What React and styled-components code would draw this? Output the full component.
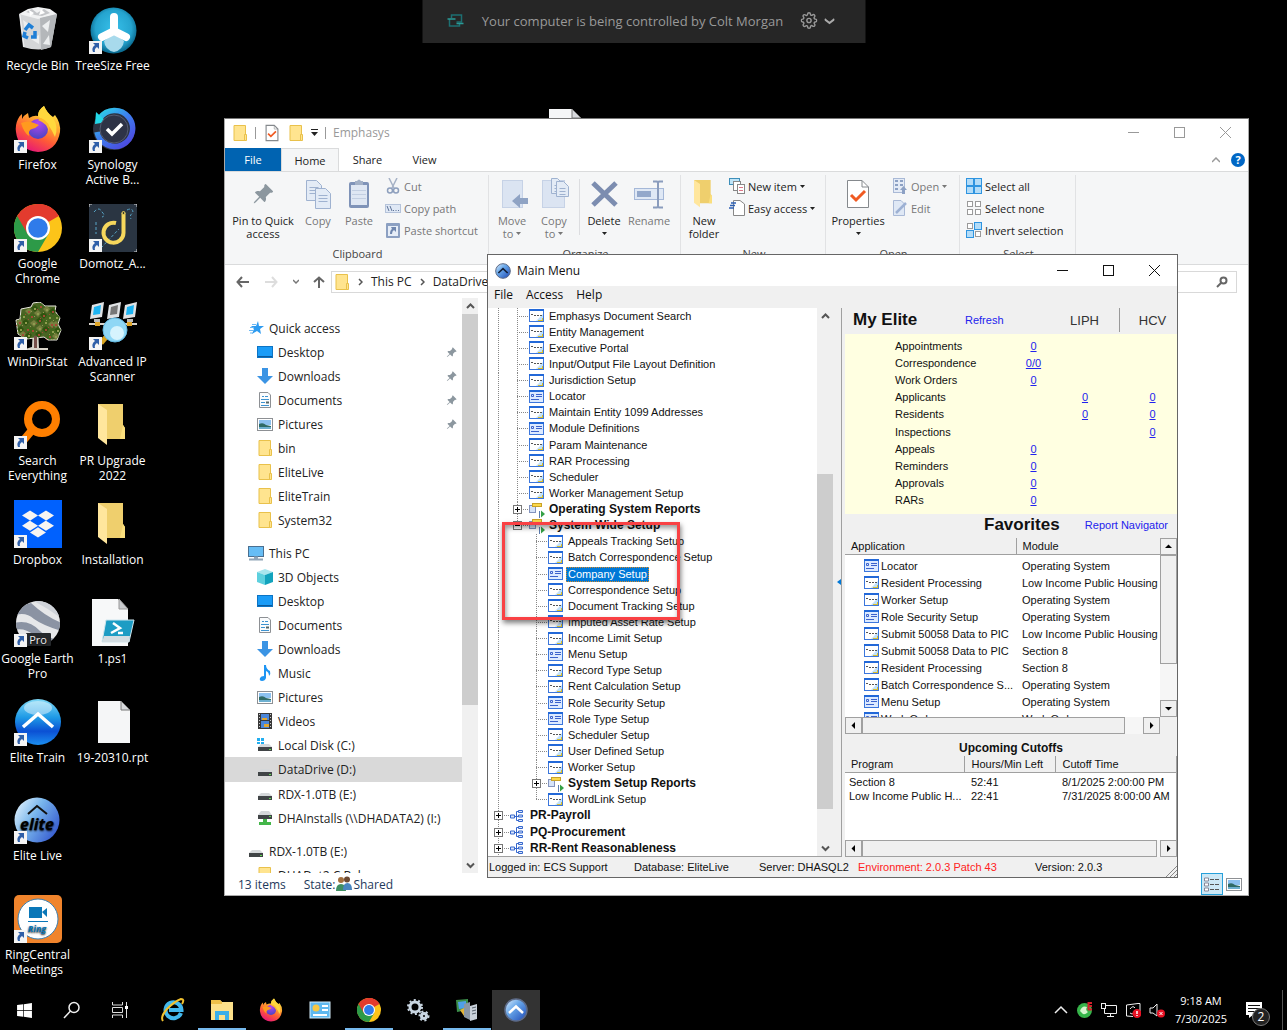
import React from "react";
import styled, { createGlobalStyle, css } from "styled-components";
import { FaDropbox, FaWindows } from "react-icons/fa";
import { BsPinAngleFill } from "react-icons/bs";
import { FiSettings } from "react-icons/fi";

const ui = `"Open Sans", "Noto Sans", sans-serif`;
const classic = `"Liberation Sans", Arial, sans-serif`;

const GlobalStyle = createGlobalStyle`
  *, *::before, *::after {
    box-sizing: border-box;
  }
  body {
    margin: 0;
    background: #000;
    font-family: ${ui};
    font-size: 12px;
    overflow: hidden;
  }
  button, input {
    font: inherit;
    color: inherit;
    border: 0;
    padding: 0;
    background: none;
  }
  h2, h3 {
    margin: 0;
  }
  svg {
    display: block;
    flex: none;
  }
  table {
    border-collapse: collapse;
  }
  th, td {
    padding: 0;
    font-weight: normal;
    text-align: left;
  }
`;

/* ---------- desktop icons ---------- */

const Svg = ({ size = 48, box = 48, children }) => (
  <svg width={size} height={size} viewBox={`0 0 ${box} ${box}`} aria-hidden="true">
    {children}
  </svg>
);

const RecycleBin = () => (
  <Svg>
    <path d="M5 8 L43 8 L37 41 Q26 46 9 41 Z" fill="#d4d6d8" />
    <path d="M5 8 L14 3 L24 1 L36 3 L43 8 L24 13 Z" fill="#f1f2f3" />
    <path d="M26 12 L43 8 L37 41 L27 44 Z" fill="#b4b7ba" />
    <path d="M9 14 l7 5 -5 6z M17 33 l8 -4 0 9z M28 20 l8 -6 -2 12z M29 38 l6 -9 1 10z" fill="#eceeef" />
    <path d="M12 6 l6 -3 5 4 7 -4 6 4 -8 3 -7 -1z" fill="#c3c5c8" />
    <path d="M15 4 l5 3 -4 3z M27 3 l4 4 -6 2z" fill="#fff" />
    <path d="M6 9 L10 41" stroke="#f2f3f4" />
    <g fill="none" stroke="#1f7fd6" strokeWidth="3.500">
      <path d="M11 24 L15 19 L19 22" />
      <path d="M21 25 L21 31 L17 31" />
      <path d="M14 32 L10 30 L11 26" />
    </g>
  </Svg>
);

const TreeSize = () => (
  <Svg>
    <defs>
      <radialGradient id="ts" cx="50%" cy="45%" r="52%">
        <stop offset="0" stopColor="#37c0ea" />
        <stop offset="0.75" stopColor="#25a4cf" />
        <stop offset="1" stopColor="#0d6f95" />
      </radialGradient>
    </defs>
    <circle cx="24.500" cy="24.500" r="23" fill="url(#ts)" />
    <path d="M15 35 L25 27 L35 35 Q34 44 25 46 Q16 44 15 35" fill="#a8daec" />
    <path d="M25 11 V25 L13 31 M25 25 L37 31" stroke="#fff" strokeWidth="8" strokeLinecap="round" strokeLinejoin="round" fill="none" />
  </Svg>
);

const Firefox = ({ size }) => (
  <Svg size={size}>
    <defs>
      <linearGradient id="ff" x1="0.8" y1="0" x2="0.3" y2="1">
        <stop offset="0" stopColor="#fff44f" />
        <stop offset="0.35" stopColor="#ffa930" />
        <stop offset="0.65" stopColor="#ff5b36" />
        <stop offset="1" stopColor="#e5147a" />
      </linearGradient>
      <radialGradient id="ffc" cx="50%" cy="20%" r="80%">
        <stop offset="0" stopColor="#b546f0" />
        <stop offset="1" stopColor="#4b45c2" />
      </radialGradient>
    </defs>
    <path d="M4 14 Q5 11 8 9 L8 14 Q10 10 14 8 L15 13 Q20 10 24 11 Q24 5 30 1 Q33 8 39 12 L41 10 Q47 18 46 27 Q43 46 24 47 Q4 45 2 27 Q1 20 4 14Z" fill="url(#ff)" />
    <path d="M30 1 Q33 8 39 13 Q45 22 41 32 Q36 20 28 14 Q24 12 24 11 Q24 5 30 1" fill="#ffd83d" />
    <circle cx="24" cy="24" r="10" fill="url(#ffc)" />
    <path d="M7 18 Q14 15 20 18 L25 20 Q22 23 18 24 Q14 25 15 31 Q10 28 7 18" fill="#ff9a1f" />
    <path d="M27 13 Q37 17 35 27 Q33 18 24 15Z" fill="#ffb82f" />
  </Svg>
);

const Synology = () => (
  <Svg>
    <defs>
      <linearGradient id="syn" x1="0" y1="0" x2="0.8" y2="1">
        <stop offset="0" stopColor="#2bd9e8" />
        <stop offset="0.5" stopColor="#3d7ff0" />
        <stop offset="1" stopColor="#4c4ade" />
      </linearGradient>
    </defs>
    <circle cx="25" cy="24" r="21" fill="#2b3242" />
    <path d="M11 13 A18 18 0 1 1 8 27" fill="none" stroke="url(#syn)" strokeWidth="5.500" />
    <path d="M7 7 L18 17 L6 19Z" fill="#22d8e8" />
    <circle cx="25" cy="24" r="14" fill="#2e3346" stroke="#545a70" />
    <path d="M18 24 L23 29 L33 19" fill="none" stroke="#fff" strokeWidth="3.500" />
  </Svg>
);

const Chrome = ({ size }) => (
  <Svg size={size}>
    <circle cx="24" cy="24" r="24" fill="#fcc419" />
    <path d="M24 24 L3.200 12 A24 24 0 0 1 44.800 12 Z" fill="#e33b2e" />
    <path d="M24 12 H44.800 A24 24 0 0 0 24 0Z" fill="#e33b2e" />
    <path d="M3.200 12 A24 24 0 0 0 24 48 L34.500 30 L24 24 Z" fill="#2d9a48" />
    <path d="M3.200 12 L13.600 30 L24 24 L24 12Z" fill="#e33b2e" />
    <circle cx="24" cy="24" r="12" fill="#fff" />
    <circle cx="24" cy="24" r="9.800" fill="#2f7bea" />
  </Svg>
);

const Domotz = () => (
  <Svg>
    <rect width="48" height="48" fill="#2a3542" />
    <path d="M0 3 V0 H3 M45 0 H48 V3 M48 45 V48 H45" stroke="#ddd" fill="none" />
    <path d="M5 8 q5 -6 8 0 q4 4 0 5 M38 6 q6 -3 6 3 q-4 2 -2 6 M7 18 V30 M12 44 L30 25" stroke="#58a6c8" strokeDasharray="3 2" fill="none" />
    <path d="M27 19 A10 10 0 1 0 34.500 29 V9" fill="none" stroke="#f6d75c" strokeWidth="4" />
    <circle cx="34.500" cy="9" r="1.500" fill="#3a3a2a" stroke="#f6d75c" />
  </Svg>
);

const leaves = [
  [9, 14], [14, 9], [20, 6], [26, 4], [32, 7], [38, 9], [42, 15], [5, 20], [11, 20], [17, 14], [23, 11],
  [29, 13], [35, 15], [41, 22], [6, 27], [13, 27], [19, 21], [25, 18], [31, 20], [37, 22], [43, 28], [18, 28],
  [25, 26], [31, 27], [38, 29], [8, 32], [14, 33], [35, 34], [41, 34], [24, 32],
];

const WinDirStat = () => (
  <Svg>
    <path d="M19 25 H24 L25 46 H34 V48 H8 L18 45Z" fill="#d8d3c8" />
    <path d="M2 18 L6 17 L7 7 L17 5 L19 1 L26 0 L31 4 L42 4 L41 9 L46 16 L44 22 L47 28 L43 38 L34 38 L30 35 L12 37 L4 32Z" fill="#4a6424" stroke="#e8e6dc" />
    {leaves.map(([x, y], i) => (
      <path
        key={i}
        d={`M${x - 3} ${y} l4 -3 3 3 -3 4z`}
        fill={["#42671c", "#77803f", "#2f540f"][i % 3]}
      />
    ))}
    {leaves.map(([x, y], i) => (
      <path key={i} d={`M${x} ${y}h2v2h-2z M${x - 3} ${y + 3}h1v1h-1z`} fill={i % 2 ? "#a34a35" : "#8f9c50"} />
    ))}
    <path d="M20 34 h3 v12 h-3z" fill="#77504a" />
  </Svg>
);

const IpScanner = () => (
  <Svg>
    <path d="M0 22 H48" stroke="#d8d3cb" strokeWidth="2" />
    {[0, 17, 33].map((x, i) => (
      <g key={x}>
        <path d={`M${x + 3} 3 L${x + 15} 0 L${x + 13} 15 L${x + 1} 17Z`} fill="#e0e2e4" />
        <path d={`M${x + 5} 5 L${x + 12} 3 L${x + 11} 12 L${x + 4} 13Z`} fill={i === 1 ? "#777" : "#1cb3f2"} />
        <path d={`M${x + 5} 17 h6 v3 h-6z`} fill="#bbb" />
      </g>
    ))}
    <path d="M6 20 h5 v4 h-5z M38 20 h5 v4 h-5z" fill="#e0a628" />
    <path d="M12 41 L18 34" stroke="#d8a31e" strokeWidth="5" />
    <circle cx="26" cy="28" r="12" fill="#8fd7f5" stroke="#64b9e2" />
    <circle cx="28" cy="31" r="7" fill="#d6f3fd" />
  </Svg>
);

const Everything = () => (
  <Svg>
    <circle cx="28" cy="18" r="14" fill="none" stroke="#ff7f00" strokeWidth="8" />
    <path d="M19 28 L8 41" stroke="#ff7f00" strokeWidth="8" />
  </Svg>
);

const Dropbox = () => (
  <DropboxTile>
    <FaDropbox />
  </DropboxTile>
);

const BigFolder = ({ size }) => (
  <Svg size={size}>
    <path d="M9 3 H34 V24 L36 27 V38 H17 L9 36Z" fill="#efcf6d" />
    <path d="M9 3 L18 9 V44 L9 37Z" fill="#ffe69d" />
    <path d="M34 24 L36 27 V38 H31Z" fill="#fbdf7d" />
  </Svg>
);

const GoogleEarth = () => (
  <Svg>
    <defs>
      <clipPath id="ge">
        <circle cx="24" cy="24" r="22" />
      </clipPath>
    </defs>
    <g clipPath="url(#ge)">
      <rect width="48" height="48" fill="#e6e7e9" />
      <path d="M2 16 Q6 5 17 4 Q32 18 48 24 V32 Q30 27 20 20 Q12 13 2 16" fill="#8b93a3" />
      <path d="M0 24 Q15 20 26 32 Q36 42 48 40 V48 H36 Q26 40 20 36 Q10 28 0 31" fill="#8b93a3" />
      <path d="M20 2 Q35 10 48 20 V12 L34 0Z" fill="#cfd3d9" />
    </g>
    <rect x="12" y="34" width="25" height="13" rx="1" fill="#25282c" />
    <text x="24" y="45" fill="#eee" fontSize="11" textAnchor="middle" fontFamily="Open Sans">Pro</text>
  </Svg>
);

const Ps1 = () => (
  <Svg>
    <path d="M3 0 H29 L39 10 V47 H3Z" fill="#f7f8f9" />
    <path d="M30 0 V10 H39Z" fill="#c9cbce" stroke="#999" />
    <path d="M17 21 H45 L40 43 H13Z" fill="#1d9cc4" stroke="#cfe6ee" />
    <path d="M15 37 H41 L40 43 H13Z" fill="#d3dde2" />
    <path d="M24 24 L31 29 L22 34 M29 34 H34" fill="none" stroke="#fff" strokeWidth="2.500" />
  </Svg>
);

const PaperFile = () => (
  <Svg>
    <path d="M9 3 H32 L41 12 V45 H9Z" fill="#f5f6f7" />
    <path d="M32 3 V12 H41Z" fill="#d8dadd" stroke="#777" />
  </Svg>
);

const EliteBall = ({ size }) => (
  <Svg size={size}>
    <defs>
      <linearGradient id="eb" x1="0" y1="0" x2="0" y2="1">
        <stop offset="0" stopColor="#7ed8f6" />
        <stop offset="0.4" stopColor="#1e9ae6" />
        <stop offset="0.7" stopColor="#0b50d4" />
        <stop offset="1" stopColor="#1c8ff0" />
      </linearGradient>
    </defs>
    <circle cx="24" cy="24" r="23" fill="url(#eb)" />
    <ellipse cx="24" cy="10" rx="14" ry="7" fill="#fff" opacity="0.45" />
    <path d="M9 29 L24 16 L39 29" fill="none" stroke="#fff" strokeWidth="3.500" />
  </Svg>
);

// the glossy, darker ball used in title bars and on the taskbar
const EliteMini = ({ size }) => (
  <Svg size={size}>
    <defs>
      <linearGradient id="em" x1="0" y1="0" x2="1" y2="1">
        <stop offset="0" stopColor="#e4f1fc" />
        <stop offset="0.4" stopColor="#69a8ea" />
        <stop offset="1" stopColor="#1b46b4" />
      </linearGradient>
    </defs>
    <circle cx="24" cy="24" r="22" fill="url(#em)" stroke="#5d6b88" strokeWidth="3" />
    <path d="M10 30 L24 17 L38 30" fill="none" stroke={size > 20 ? "#fff" : "#152038"} strokeWidth="5" />
  </Svg>
);

const EliteLive = () => (
  <Svg>
    <defs>
      <linearGradient id="el" x1="0" y1="0" x2="1" y2="0.6">
        <stop offset="0" stopColor="#f2fbff" />
        <stop offset="0.5" stopColor="#78b5ec" />
        <stop offset="1" stopColor="#3c63d2" />
      </linearGradient>
    </defs>
    <circle cx="23" cy="24" r="22.500" fill="url(#el)" />
    <path d="M14 18 L23 10 L33 18" fill="none" stroke="#111" strokeWidth="2" />
    <text x="23" y="34" textAnchor="middle" fontSize="16" fontStyle="italic" fontWeight="bold" fontFamily="Open Sans">elite</text>
  </Svg>
);

const RingCentral = () => (
  <Svg>
    <rect width="48" height="48" rx="5" fill="#f0842c" />
    <circle cx="24" cy="24" r="20" fill="#fff" stroke="#3c7fb0" />
    <path d="M15 12 h13 v11 h-13z M28 17 l5 -4 v9z M14 26 h20 v1 h-20z" fill="#0a77b8" />
    <text x="23" y="37" textAnchor="middle" fontSize="9" fontStyle="italic" fontWeight="bold" fill="#0a77b8" fontFamily="Open Sans">Ring</text>
  </Svg>
);

const desktopIcons = [
  { label: "Recycle Bin", icon: <RecycleBin /> },
  { label: "Firefox", icon: <Firefox />, shortcut: true },
  { label: "Google Chrome", icon: <Chrome />, shortcut: true },
  { label: "WinDirStat", icon: <WinDirStat />, shortcut: true },
  { label: "Search Everything", icon: <Everything />, shortcut: true },
  { label: "Dropbox", icon: <Dropbox />, shortcut: true },
  { label: "Google Earth Pro", icon: <GoogleEarth />, shortcut: true },
  { label: "Elite Train", icon: <EliteBall />, shortcut: true },
  { label: "Elite Live", icon: <EliteLive />, shortcut: true },
  { label: "RingCentral Meetings", icon: <RingCentral />, shortcut: true },
  { label: "TreeSize Free", icon: <TreeSize />, shortcut: true },
  { label: "Synology Active B...", icon: <Synology />, shortcut: true },
  { label: "Domotz_A...", icon: <Domotz />, shortcut: true },
  { label: "Advanced IP Scanner", icon: <IpScanner />, shortcut: true },
  { label: "PR Upgrade 2022", icon: <BigFolder /> },
  { label: "Installation", icon: <BigFolder /> },
  { label: "1.ps1", icon: <Ps1 /> },
  { label: "19-20310.rpt", icon: <PaperFile /> },
];

const Shortcut = () => (
  <ShortcutBadge>
    <svg width="13" height="13" viewBox="0 0 13 13">
      <rect width="13" height="13" fill="#f4f4f4" />
      <path d="M4 2 H10 V8 L8 6 Q5 8 6 11 H4 Q2 7 6 4Z" fill="#2f5fa8" />
    </svg>
  </ShortcutBadge>
);

const DesktopIcons = () => (
  <IconGrid>
    {desktopIcons.map((item) => (
      <DesktopItem key={item.label}>
        <IconFrame>
          {item.icon}
          {item.shortcut && <Shortcut />}
        </IconFrame>
        <span>{item.label}</span>
      </DesktopItem>
    ))}
  </IconGrid>
);

const IconGrid = styled.div`
  display: grid;
  grid-auto-flow: column;
  grid-template-rows: repeat(10, 1fr);
  grid-auto-columns: 75px;
  height: 100%;
  padding-bottom: 2px;
  justify-content: start;
`;

const DesktopItem = styled.button`
  display: flex;
  flex-direction: column;
  align-items: center;
  justify-content: flex-start;
  padding-top: 6px;
  gap: 4px;
  color: #fff;
  font-size: 12px;
  line-height: 15px;
  text-align: center;
  text-shadow: 0 1px 2px #000;
`;

const IconFrame = styled.span`
  position: relative;
  width: 48px;
  height: 48px;
`;

const ShortcutBadge = styled.span`
  position: absolute;
  left: 0;
  bottom: 0;
`;

const DropboxTile = styled.span`
  display: flex;
  align-items: center;
  justify-content: center;
  width: 48px;
  height: 48px;
  background: #0061fe;
  color: #f7f5f2;
  font-size: 32px;
`;

/* ---------- small explorer icons ---------- */

const SmallFolder = () => (
  <Svg size={16} box={16}>
    <path d="M2 0.500 H13.500 V15.500 H2Z" fill="#ffe48f" stroke="#e9c14b" />
    <path d="M12.500 9.500 h2 v6 h-2z" fill="#ffe48f" stroke="#e9c14b" />
  </Svg>
);

const StarIcon = () => (
  <Svg size={16} box={16}>
    <path d="M10 1 L11 6 L16 6 L12 9 L13 14 L9 11 L4 14 L6 9 L3 6 L8 6Z" fill="#2d9bf0" />
    <path d="M4 4.500 h4 M2 7.500 h4 M1 10.500 h5 M2 13 h3" stroke="#6cb8f3" />
  </Svg>
);

const DesktopMini = () => (
  <Svg size={16} box={16}>
    <rect x="0.500" y="2.500" width="15" height="11" fill="#1a9cf7" stroke="#0c74c4" />
    <path d="M1 12.500 h14" stroke="#0b5a9c" />
  </Svg>
);

const DownloadMini = () => (
  <Svg size={16} box={16}>
    <path d="M5 0 H11 V8 H16 L8 16 L0 8 H5Z" fill="#3b94e4" />
  </Svg>
);

const DocumentMini = () => (
  <Svg size={16} box={16}>
    <path d="M2.500 0.500 H11 L13.500 3 V15.500 H2.500Z" fill="#fbfcfd" stroke="#8d9094" />
    <path d="M5 4.500 h2 M8 4.500 h3 M4 7.500 h8 M4 10.500 h4 M4 13.500 h8" stroke="#3e93d0" />
    <path d="M9 9.500 h3 v2 h-3z" fill="#566" />
  </Svg>
);

const PictureMini = () => (
  <Svg size={16} box={16}>
    <rect x="0.500" y="2.500" width="15" height="12" fill="#fff" stroke="#8d9094" />
    <rect x="2" y="4" width="12" height="5" fill="#8cc1f0" />
    <path d="M2 8 Q6 6 9 9 L14 10 V13 H2Z" fill="#2f6b66" />
    <path d="M2 11 h12 v2 h-12z" fill="#6db0d0" />
  </Svg>
);

const MusicMini = () => (
  <Svg size={16} box={16}>
    <path d="M7 0 H9 Q9 4 13 6 Q14 9 12 11 Q12 7 9 6 V13 Q8 16 5 16 Q2 16 3 13 Q4 11 7 11Z" fill="#1e95f3" />
  </Svg>
);

const VideoMini = () => (
  <Svg size={16} box={16}>
    <rect x="1" y="0" width="14" height="16" fill="#383838" />
    <rect x="4" y="1" width="8" height="6" fill="#4b86d8" />
    <rect x="4" y="8" width="8" height="7" fill="#4b86d8" />
    <path d="M5 5 h5 v2 h-5z M7 11 h5 v3 h-5z" fill="#e0a530" />
    <path d="M2.500 1 V16 M13.500 1 V16" stroke="#ccc" strokeDasharray="1 2" />
  </Svg>
);

const PcMini = () => (
  <Svg size={16} box={16}>
    <rect x="0.500" y="1.500" width="15" height="10" fill="#66bdf5" stroke="#4a6f90" />
    <path d="M1 14.500 h14 M6 12.500 h4" stroke="#90a5b8" strokeWidth="2" />
  </Svg>
);

const CubeMini = () => (
  <Svg size={16} box={16}>
    <path d="M0 3 L8 0 L16 3 L8 6Z" fill="#a8e6ee" />
    <path d="M0 3 L8 6 V16 L0 13Z" fill="#5dd0de" />
    <path d="M16 3 L8 6 V16 L16 13Z" fill="#12a3bd" />
  </Svg>
);

const DriveMini = ({ os, net }) => (
  <Svg size={16} box={16}>
    {os && <path d="M0 1 h3 v3 h-3z M4 1 h3 v3 h-3z M0 5 h3 v2 h-3z M4 5 h3 v2 h-3z" fill="#22aef0" />}
    <path d={net ? "M4 1 H12 L15 5 H1Z" : "M4 7 H12 L15 10 H1Z"} fill="#d5d8da" />
    <rect x="1" y={net ? 5 : 10} width="14" height="4" fill="#404446" />
    <rect x="12" y={net ? 6 : 12} width="2" height="1" fill="#5fdc50" />
    {net && <path d="M6 9 h4 v3 h4 v3 h-12 v-3 h4z" fill="#43b649" />}
  </Svg>
);

const MinGlyph = () => <path d="M0 5.500 h11" stroke="currentColor" />;
const MaxGlyph = () => <rect x="0.500" y="0.500" width="10" height="10" fill="none" stroke="currentColor" />;
const CloseGlyph = () => <path d="M0 0 L11 11 M11 0 L0 11" stroke="currentColor" />;

const WindowButtons = () => (
  <Controls>
    {[["Minimize", MinGlyph], ["Maximize", MaxGlyph], ["Close", CloseGlyph]].map(([name, Glyph]) => (
      <button key={name} aria-label={name}>
        <Svg size={11} box={11}>
          <Glyph />
        </Svg>
      </button>
    ))}
  </Controls>
);

const Controls = styled.div`
  display: flex;
  margin-left: auto;
  button {
    width: 46px;
    height: 30px;
    display: flex;
    align-items: center;
    justify-content: center;
  }
`;

/* ---------- ribbon ---------- */

const tint = { fill: "#dbe4f2", stroke: "#c6d2e6" };

const Sheet = ({ x, y, w = 14, h = 19, fill = "#e3ebf6", stroke = "#9fb2d0" }) => (
  <g>
    <path d={`M${x} ${y} h${w - 5} l5 5 v${h - 5} h-${w}z`} fill={fill} stroke={stroke} />
    <path d={`M${x + 3} ${y + 7} h${w - 6} M${x + 3} ${y + 10} h${w - 6} M${x + 3} ${y + 13} h${w - 6}`} stroke={stroke} />
  </g>
);

const CopyBig = () => (
  <Svg size={32} box={32}>
    <Sheet x={4.5} y={2.5} w={15} h={20} />
    <Sheet x={13.5} y={10.5} w={15} h={20} />
  </Svg>
);

const PasteBig = () => (
  <Svg size={32} box={32}>
    <rect x="6" y="4" width="20" height="26" rx="2" fill="#7f93b8" />
    <rect x="8" y="7" width="16" height="20" fill="#dfe7f3" />
    <path d="M12 3 h2 q2 -3 4 0 h2 v4 h-8z" fill="#a2b0c6" />
    <path d="M9 12.500 h14 M9 16.500 h14 M9 20.500 h14" stroke="#c3cfe2" />
  </Svg>
);

const MoveBig = () => (
  <Svg size={32} box={32}>
    <rect x="6.500" y="2.500" width="20" height="27" {...tint} />
    <path d="M16 23 L24 16 V20 H32 V26 H24 V30Z" fill="#8fa3c4" />
  </Svg>
);

const CopyToBig = () => (
  <Svg size={32} box={32}>
    <rect x="4.500" y="2.500" width="22" height="27" {...tint} />
    <Sheet x={13.5} y={0.5} w={11} h={15} />
    <Sheet x={18.5} y={3.5} w={12} h={15} />
  </Svg>
);

const DeleteBig = () => (
  <Svg size={32} box={32}>
    <path d="M5 5 L28 27 M28 5 L5 27" stroke="#7c8db0" strokeWidth="5" />
  </Svg>
);

const RenameBig = () => (
  <Svg size={32} box={32}>
    <rect x="1.500" y="10.500" width="29" height="11" fill="#dfe8f5" stroke="#a5b8d8" />
    <rect x="4" y="13" width="14" height="6" fill="#93a8cb" />
    <path d="M20 3.500 h4 l1 1 l1 -1 h4 M20 29.500 h4 l1 -1 l1 1 h4 M25 4 V29" stroke="#8a9cbd" strokeWidth="2" fill="none" />
  </Svg>
);

const PropertiesIcon = ({ size = 32 }) => (
  <Svg size={size} box={32}>
    <path d="M5.500 2.500 H20 L26.500 9 V29.500 H5.500Z" fill="#fff" stroke="#85898d" strokeWidth={size < 32 ? 2 : 1} />
    <path d="M20 2.500 V9 H26.500" fill="none" stroke="#85898d" />
    <path d="M9 17 L14 22 L23 13" fill="none" stroke="#f05a22" strokeWidth="3" />
  </Svg>
);

const CutIcon = () => (
  <Svg size={16} box={16}>
    <path d="M4 0 L9 10 M12 0 L7 10" stroke="#a6b2c6" strokeWidth="1.500" />
    <circle cx="5" cy="12.500" r="2.500" fill="none" stroke="#8d9fbd" strokeWidth="1.500" />
    <circle cx="11" cy="12.500" r="2.500" fill="none" stroke="#8d9fbd" strokeWidth="1.500" />
  </Svg>
);

const PathIcon = () => (
  <Svg size={16} box={16}>
    <rect x="0.500" y="4.500" width="15" height="8" fill="#dfe8f5" stroke="#b5c3da" />
    <path d="M2 6 l2 5 M5 6 l2 5 M8 10.500 h1 M10.500 10.500 h1 M13 10.500 h1" stroke="#5f7499" />
  </Svg>
);

const ShortcutIcon = () => (
  <Svg size={16} box={16}>
    <rect x="1" y="1" width="14" height="15" rx="1" fill="#8ca0c2" />
    <rect x="3" y="4" width="10" height="10" fill="#e6edf7" />
    <path d="M6 5 H11 V10 L9 8 Q7 9 7 12 H5 Q5 8 7 7Z" fill="#6f86ae" />
  </Svg>
);

const NewItemIcon = () => (
  <Svg size={16} box={16}>
    <rect x="0.500" y="0.500" width="10" height="6" fill="#bfe4f7" stroke="#3d8eb9" />
    <rect x="4.500" y="3.500" width="7" height="9" fill="#fff" stroke="#888" />
    <rect x="8.500" y="6.500" width="7" height="9" fill="#fff" stroke="#888" />
    <path d="M10 9.500 h4 M10 12.500 h4" stroke="#d78" />
  </Svg>
);

const EasyIcon = () => (
  <Svg size={16} box={16}>
    <path d="M4.500 0.500 H11 L15.500 4 V15.500 H4.500Z" fill="#fff" stroke="#888" />
    <path d="M2 3 h5 M1 5.500 h5 M0 8 h5" stroke="#2f62b5" strokeWidth="1.500" />
  </Svg>
);

const OpenIcon = () => (
  <Svg size={16} box={16}>
    <rect x="1.500" y="0.500" width="11" height="14" fill="#e4ebf6" stroke="#a9b9d6" />
    <path d="M3 3 h3 M3 7 h3 M3 11 h3 M8 3 h3 M8 7 h3" stroke="#8da1c4" strokeWidth="2" />
    <path d="M8 12 L11.500 8 L15 12 H13 V16 H10 V12Z" fill="#8da1c4" />
  </Svg>
);

const EditIcon = () => (
  <Svg size={16} box={16}>
    <path d="M1.500 0.500 H9 L12.500 4 V15.500 H1.500Z" fill="#dfe8f5" stroke="#a9b9d6" />
    <path d="M4 13 L14 3" stroke="#9db1d3" strokeWidth="2.500" />
  </Svg>
);

const Cells = ({ on }) => (
  <Svg size={16} box={16}>
    {[[0.5, 0.5], [8.5, 0.5], [0.5, 8.5], [8.5, 8.5]].map(([x, y], i) => {
      const lit = on.includes(i);
      return lit ? (
        <rect key={i} x={x} y={y} width="7" height="7" fill="#b3dcf8" stroke="#2e94e0" />
      ) : (
        <rect key={i} x={x + 1} y={y + 1} width="5" height="5" fill="#fff" stroke="#9a9a9a" />
      );
    })}
  </Svg>
);

const Caret = () => (
  <svg width="5" height="3" viewBox="0 0 5 3" aria-hidden="true">
    <path d="M0 0 H5 L2.500 3Z" fill="currentColor" />
  </svg>
);

const Pin = ({ big }) => <PinGlyph as={BsPinAngleFill} $big={big} />;

const PinGlyph = styled.svg`
  width: ${(p) => (p.$big ? 22 : 11)}px;
  height: ${(p) => (p.$big ? 32 : 11)}px;
  color: #8c979f;
`;

const Ribbon = () => (
  <RibbonBar>
    <Group>
      <Tools>
        <BigTool $w={72}><Pin big />Pin to Quick access</BigTool>
        <BigTool $w={38} $off><CopyBig />Copy</BigTool>
        <BigTool $w={44} $off><PasteBig />Paste</BigTool>
        <ToolStack>
          <SmallTool $off><CutIcon />Cut</SmallTool>
          <SmallTool $off><PathIcon />Copy path</SmallTool>
          <SmallTool $off><ShortcutIcon />Paste shortcut</SmallTool>
        </ToolStack>
      </Tools>
      <GroupName>Clipboard</GroupName>
    </Group>
    <Group>
      <Tools>
        <BigTool $w={42} $off><MoveBig />Move<span>to <Caret /></span></BigTool>
        <BigTool $w={42} $off><CopyToBig />Copy<span>to <Caret /></span></BigTool>
        <Divider />
        <BigTool $w={40}><DeleteBig />Delete<span><Caret /></span></BigTool>
        <BigTool $w={50} $off><RenameBig />Rename</BigTool>
      </Tools>
      <GroupName>Organize</GroupName>
    </Group>
    <Group>
      <Tools>
        <BigTool $w={42}><BigFolder size={32} />New folder</BigTool>
        <ToolStack>
          <SmallTool><NewItemIcon />New item <Caret /></SmallTool>
          <SmallTool><EasyIcon />Easy access <Caret /></SmallTool>
        </ToolStack>
      </Tools>
      <GroupName>New</GroupName>
    </Group>
    <Group>
      <Tools>
        <BigTool $w={60}><PropertiesIcon />Properties<span><Caret /></span></BigTool>
        <ToolStack>
          <SmallTool $off><OpenIcon />Open <Caret /></SmallTool>
          <SmallTool $off><EditIcon />Edit</SmallTool>
        </ToolStack>
      </Tools>
      <GroupName>Open</GroupName>
    </Group>
    <Group>
      <Tools>
        <ToolStack>
          <SmallTool><Cells on={[0, 1, 2, 3]} />Select all</SmallTool>
          <SmallTool><Cells on={[]} />Select none</SmallTool>
          <SmallTool><Cells on={[1, 2]} />Invert selection</SmallTool>
        </ToolStack>
      </Tools>
      <GroupName>Select</GroupName>
    </Group>
  </RibbonBar>
);

const RibbonBar = styled.div`
  display: flex;
  flex: none;
  height: 94px;
  background: #f5f6f7;
  border-top: 1px solid #dadbdc;
  border-bottom: 1px solid #dadbdc;
  font-size: 11px;
  color: #222;
`;

const Group = styled.section`
  display: flex;
  flex-direction: column;
  margin-top: 3px;
  padding-left: 2px;
  border-right: 1px solid #e1e2e4;
  &:nth-of-type(1) { width: 264px; }
  &:nth-of-type(2) { width: 192px; }
  &:nth-of-type(3) { width: 145px; }
  &:nth-of-type(4) { width: 134px; }
  &:nth-of-type(5) { width: 116px; }
`;

const Tools = styled.div`
  display: flex;
  flex: 1;
`;

const BigTool = styled.button`
  display: flex;
  flex-direction: column;
  align-items: center;
  width: ${(p) => p.$w}px;
  padding-top: 3px;
  line-height: 13px;
  color: ${(p) => (p.$off ? "#777" : "#222")};
  svg:first-child {
    margin-bottom: 4px;
  }
  span {
    display: flex;
    align-items: center;
    gap: 3px;
    min-height: 13px;
  }
  span svg:first-child {
    margin: 0;
  }
`;

const ToolStack = styled.div`
  display: flex;
  flex-direction: column;
  padding-left: 4px;
`;

const SmallTool = styled.button`
  display: flex;
  align-items: center;
  gap: 3px;
  height: 22px;
  white-space: nowrap;
  color: ${(p) => (p.$off ? "#777" : "#222")};
`;

const Divider = styled.span`
  width: 1px;
  height: 56px;
  margin: 4px 4px 0;
  background: #dcdde0;
`;

const GroupName = styled.div`
  text-align: center;
  height: 19px;
  line-height: 17px;
  color: #444;
`;

/* ---------- explorer ---------- */

const navGroups = [
  {
    name: "Quick access",
    icon: <StarIcon />,
    items: [
      { name: "Desktop", icon: <DesktopMini />, pinned: true },
      { name: "Downloads", icon: <DownloadMini />, pinned: true },
      { name: "Documents", icon: <DocumentMini />, pinned: true },
      { name: "Pictures", icon: <PictureMini />, pinned: true },
      { name: "bin", icon: <SmallFolder /> },
      { name: "EliteLive", icon: <SmallFolder /> },
      { name: "EliteTrain", icon: <SmallFolder /> },
      { name: "System32", icon: <SmallFolder /> },
    ],
  },
  {
    name: "This PC",
    icon: <PcMini />,
    items: [
      { name: "3D Objects", icon: <CubeMini /> },
      { name: "Desktop", icon: <DesktopMini /> },
      { name: "Documents", icon: <DocumentMini /> },
      { name: "Downloads", icon: <DownloadMini /> },
      { name: "Music", icon: <MusicMini /> },
      { name: "Pictures", icon: <PictureMini /> },
      { name: "Videos", icon: <VideoMini /> },
      { name: "Local Disk (C:)", icon: <DriveMini os /> },
      { name: "DataDrive (D:)", icon: <DriveMini />, selected: true },
      { name: "RDX-1.0TB (E:)", icon: <DriveMini /> },
      { name: "DHAInstalls (\\\\DHADATA2) (I:)", icon: <DriveMini net /> },
    ],
  },
  {
    name: "RDX-1.0TB (E:)",
    icon: <DriveMini />,
    items: [{ name: "DHADat2 C Bak", icon: <SmallFolder /> }],
  },
];

const NavPane = () => (
  <NavWrap>
    <NavList>
      {navGroups.map((group) => (
        <NavGroup key={group.name}>
          <NavRow href="#">{group.icon}{group.name}</NavRow>
          {group.items.map((item) => (
            <NavRow href="#" key={item.name} $child $selected={item.selected}>
              {item.icon}
              <span>{item.name}</span>
              {item.pinned && <Pin />}
            </NavRow>
          ))}
        </NavGroup>
      ))}
    </NavList>
    <ScrollBar>
      <Chevron up />
      <Thumb $grow={389} />
      <Space $grow={151} />
      <Chevron />
    </ScrollBar>
  </NavWrap>
);

const Chevron = ({ up }) => (
  <Svg size={16} box={16}>
    <path d={up ? "M5 10 L8.500 6.500 L12 10" : "M5 6.500 L8.500 10 L12 6.500"} fill="none" stroke="#555" strokeWidth="2" />
  </Svg>
);

const Explorer = () => (
  <ExplorerWindow>
    <TitleBar>
      <SmallFolder />
      <Bar />
      <PropertiesIcon size={18} />
      <SmallFolder />
      <svg width="7" height="7" viewBox="0 0 7 7"><path d="M0 0 h7 v1 h-7z M0 3 h7 l-3.500 4z" fill="#222" /></svg>
      <Bar />
      <span>Emphasys</span>
      <WindowButtons />
    </TitleBar>
    <Tabs>
      <Tab $kind="file">File</Tab>
      <Tab $kind="on">Home</Tab>
      <Tab>Share</Tab>
      <Tab>View</Tab>
      <TabEnd>
        <svg width="8" height="6" viewBox="0 0 8 6"><path d="M0 5 L4 1 L8 5" fill="none" stroke="#999" strokeWidth="1.500" /></svg>
        <HelpButton aria-label="Help">?</HelpButton>
      </TabEnd>
    </Tabs>
    <Ribbon />
    <AddressRow>
      <NavArrows>
        <Svg size={14} box={14}><path d="M13 7 H2 M6 2 L1.500 7 L6 12" stroke="#666" strokeWidth="2" fill="none" /></Svg>
        <Svg size={14} box={14}><path d="M1 7 H12 M8 2 L12.500 7 L8 12" stroke="#ddd" strokeWidth="2" fill="none" /></Svg>
        <Svg size={6} box={6}><path d="M0 1 L3 4 L6 1" stroke="#777" strokeWidth="1.500" fill="none" /></Svg>
        <Svg size={12} box={12}><path d="M6 12 V2 M1 6 L6 1.500 L11 6" stroke="#666" strokeWidth="2" fill="none" /></Svg>
      </NavArrows>
      <AddressBox>
        <SmallFolder />
        <Crumb />
        <a href="#">This PC</a>
        <Crumb />
        <a href="#">DataDrive (D:)</a>
      </AddressBox>
      <SearchBox>
        <input aria-label="Search Emphasys" />
        <Svg size={12} box={12}>
          <circle cx="7.500" cy="4.500" r="3" fill="none" stroke="#666" strokeWidth="2" />
          <path d="M5 7 L1 11" stroke="#666" strokeWidth="2" />
        </Svg>
      </SearchBox>
    </AddressRow>
    <NavPane />
    <ExplorerStatus>
      <span>13 items</span>
      <span>
        State:
        <Svg size={16} box={16}>
          <circle cx="5" cy="4" r="3" fill="#a4703f" />
          <path d="M0 15 Q0 8 5 8 Q10 8 10 15Z" fill="#3f8f62" />
          <circle cx="11" cy="3.500" r="3" fill="#6d4a33" />
          <path d="M7 14 Q7 7 11.500 7 Q16 7 16 14Z" fill="#4a86c0" />
        </Svg>
        Shared
      </span>
      <ViewSwitch>
        <ViewButton $on aria-label="Details view">
          <Svg size={16} box={16}>
            <path d="M0.500 2 h4 v3 h-4z M0.500 7 h4 v3 h-4z M0.500 12 h4 v3 h-4z" fill="#fff" stroke="#889" />
            <path d="M6 3.500 h4 M11 3.500 h4 M6 8.500 h4 M11 8.500 h4 M6 13.500 h4 M11 13.500 h4" stroke="#555" />
          </Svg>
        </ViewButton>
        <ViewButton aria-label="Thumbnails view"><PictureMini /></ViewButton>
      </ViewSwitch>
    </ExplorerStatus>
  </ExplorerWindow>
);

const Crumb = () => (
  <svg width="5" height="8" viewBox="0 0 5 8"><path d="M1 1 L4 4 L1 7" stroke="#555" strokeWidth="1.500" fill="none" /></svg>
);

const ExplorerWindow = styled.section`
  position: absolute;
  left: 224px;
  right: 38px;
  top: 118px;
  bottom: 94px;
  display: flex;
  flex-direction: column;
  background: #fff;
  border: 1px solid #aaa;
  border-top-color: #777;
  overflow: hidden;
`;

const TitleBar = styled.header`
  display: flex;
  align-items: center;
  flex: none;
  height: 29px;
  padding: 0 0 2px 7px;
  gap: 7px;
  color: #999;
`;

const Bar = styled.span`
  width: 1px;
  height: 12px;
  background: #999;
`;

const Tabs = styled.nav`
  display: flex;
  flex: none;
  height: 23px;
  font-size: 11px;
`;

const Tab = styled.button`
  width: 57px;
  color: #222;
  ${(p) => p.$kind === "file" && css`
    width: 56px;
    background: #0063b1;
    color: #fff;
  `}
  ${(p) => p.$kind === "on" && css`
    width: 58px;
    background: #f5f6f7;
    border: 1px solid #dadbdc;
    border-bottom: 0;
  `}
`;

const TabEnd = styled.div`
  display: flex;
  align-items: center;
  gap: 11px;
  margin-left: auto;
  margin-right: 3px;
`;

const HelpButton = styled.button`
  width: 14px;
  height: 14px;
  border-radius: 50%;
  background: #0067c5;
  color: #fff;
  font-weight: bold;
  line-height: 14px;
`;

const AddressRow = styled.div`
  display: flex;
  align-items: center;
  flex: none;
  height: 33px;
  padding: 0 11px;
  gap: 6px;
`;

const NavArrows = styled.div`
  display: flex;
  align-items: center;
  justify-content: space-between;
  width: 89px;
`;

const AddressBox = styled.div`
  display: flex;
  align-items: center;
  flex: 1;
  height: 22px;
  border: 1px solid #d9d9d9;
  padding-left: 2px;
  gap: 8px;
  a {
    color: #222;
    text-decoration: none;
  }
`;

const SearchBox = styled.label`
  display: flex;
  align-items: center;
  width: 200px;
  height: 22px;
  border: 1px solid #d9d9d9;
  padding: 0 8px;
  input {
    flex: 1;
    min-width: 0;
  }
`;

const NavWrap = styled.div`
  display: flex;
  flex: 1;
  width: 253px;
  min-height: 0;
`;

const NavList = styled.nav`
  flex: 1;
  padding-top: 18px;
  overflow: hidden;
`;

const NavGroup = styled.div`
  margin-bottom: 9px;
`;

const NavRow = styled.a`
  display: flex;
  align-items: center;
  height: ${(p) => (p.$selected ? 25 : 24)}px;
  gap: 5px;
  padding: 0 5px 0 ${(p) => (p.$child ? 32 : 23)}px;
  background: ${(p) => (p.$selected ? "#d9d9d9" : "transparent")};
  color: #222;
  text-decoration: none;
  white-space: nowrap;
  span + svg {
    margin-left: auto;
  }
`;

const ScrollBar = styled.div`
  display: flex;
  flex-direction: column;
  width: 16px;
  background: #f0f0f0;
`;

const Thumb = styled.span`
  flex: ${(p) => p.$grow} 0 0;
  background: #cdcdcd;
`;

const Space = styled.span`
  flex: ${(p) => p.$grow} 0 0;
`;

const ExplorerStatus = styled.footer`
  display: flex;
  align-items: center;
  flex: none;
  height: 22px;
  padding-left: 13px;
  gap: 18px;
  color: #1e395b;
  span {
    display: flex;
    align-items: center;
    gap: 1px;
  }
`;

const ViewSwitch = styled.div`
  display: flex;
  margin-left: auto;
  margin-right: 3px;
`;

const ViewButton = styled.button`
  display: flex;
  align-items: center;
  justify-content: center;
  width: 22px;
  height: 22px;
  ${(p) => p.$on && css`
    background: #cce8f6;
    border: 1px solid #26a0da;
  `}
`;

/* ---------- main menu window ---------- */

const ScreenIcon = ({ form }) => (
  <svg width="15" height="14" viewBox="0 0 15 14" aria-hidden="true">
    <rect x="0.500" y="0.500" width="14" height="12" fill={form ? "#dceaff" : "#fff"} stroke="#3b76dc" />
    <path d="M0 0 h15 v2 h-15z" fill="#2268d8" />
    {form ? (
      <>
        <path d="M2.500 4.500 h2 v2 h-2z" fill="none" stroke="#3b62cc" />
        <path d="M7 4 h6 v1 h-6z M7 6 h6 v1 h-6z M2 9 h8 v1 h-8z" fill="#3b62cc" />
      </>
    ) : (
      <>
        <path d="M7 12 L14 5 V12Z" fill="#bfe0fb" />
        <path d="M2 5 h2 v1 h-2z M5 6 h2 v1 h-2z M8 6 h2 v1 h-2z M11 6 h2 v1 h-2z" fill="#555" />
        <path d="M9 11 h4 v-2 h1 v3 h-5z" fill="#dcbf2c" />
      </>
    )}
  </svg>
);

const ReportsIcon = () => (
  <svg width="16" height="16" viewBox="0 0 16 16" aria-hidden="true">
    <rect x="0.500" y="3.500" width="6" height="7" fill="#d6e3f8" stroke="#8393bd" />
    <rect x="3.500" y="1.500" width="9" height="3" fill="#fbd84a" stroke="#c9a227" />
    <path d="M10.500 9 V16" stroke="#5b7bb0" />
    <path d="M12 8.500 L16 12 L12 15.500Z" fill="#35a045" />
  </svg>
);

const ModuleIcon = () => (
  <svg width="15" height="14" viewBox="0 0 15 14" aria-hidden="true">
    <path d="M0.500 6 h4 v3 h-4z M8.500 1.500 h4 v2 h-4z M8.500 6 h4 v2 h-4z M8.500 10.500 h4 v2 h-4z" fill="#dbe6fb" stroke="#3567cd" />
    <path d="M5 7.500 h3 M6.500 2.500 V11.500 M6.500 2.500 h2 M6.500 11.500 h2" stroke="#3567cd" fill="none" />
  </svg>
);

// a leading * marks a form screen, which has its own icon
const leaf = (depth) => (text) => {
  const form = text.startsWith("*");
  return { depth, text: form ? text.slice(1) : text, icon: <ScreenIcon form={form} /> };
};

const tree = [
  ...[
    "Emphasys Document Search", "Entity Management", "Executive Portal", "Input/Output File Layout Definition",
    "Jurisdiction Setup", "*Locator", "Maintain Entity 1099 Addresses", "*Module Definitions", "Param Maintenance",
    "RAR Processing", "Scheduler", "Worker Management Setup",
  ].map(leaf(1)),
  { depth: 1, text: "Operating System Reports", icon: <ReportsIcon />, toggle: "+" },
  { depth: 1, text: "System Wide Setup", icon: <ReportsIcon />, toggle: "-", last: true },
  ...[
    "Appeals Tracking Setup", "Batch Correspondence Setup", "*Company Setup", "Correspondence Setup",
    "Document Tracking Setup", "Imputed Asset Rate Setup", "Income Limit Setup", "*Menu Setup", "Record Type Setup",
    "Rent Calculation Setup", "*Role Security Setup", "*Role Type Setup", "Scheduler Setup", "User Defined Setup",
    "Worker Setup",
  ].map(leaf(2)),
  { depth: 2, text: "System Setup Reports", icon: <ReportsIcon />, toggle: "+" },
  { ...leaf(2)("WordLink Setup"), last: true },
  { depth: 0, text: "PR-Payroll", icon: <ModuleIcon />, toggle: "+" },
  { depth: 0, text: "PQ-Procurement", icon: <ModuleIcon />, toggle: "+" },
  { depth: 0, text: "RR-Rent Reasonableness", icon: <ModuleIcon />, toggle: "+" },
];

const TreeView = () => (
  <Tree>
    {tree.map((node) => (
      <TreeRow key={node.text}>
        {node.depth > 0 && <Guide $line />}
        {node.depth > 1 && <Guide />}
        <Joint $last={node.last}>
          {node.toggle && (
            <Toggle aria-label={(node.toggle === "+" ? "Expand " : "Collapse ") + node.text}>
              <svg width="9" height="9" viewBox="0 0 9 9">
                <rect x="0.500" y="0.500" width="8" height="8" fill="#fff" stroke="#777" />
                <path d={node.toggle === "+" ? "M2 4.500 h5 M4.500 2 v5" : "M2 4.500 h5"} stroke="#000" />
              </svg>
            </Toggle>
          )}
        </Joint>
        <NodeIcon>{node.icon}</NodeIcon>
        <NodeLabel $bold={!!node.toggle} $selected={node.text === "Company Setup"}>{node.text}</NodeLabel>
      </TreeRow>
    ))}
  </Tree>
);

const Tree = styled.ul`
  flex: 1;
  display: flex;
  flex-direction: column;
  margin: 0;
  padding: 0 0 0 1px;
  list-style: none;
  background: #fff;
`;

const TreeRow = styled.li`
  display: flex;
  align-items: center;
  flex: 1;
  min-height: 0;
`;

const dotsDown = "repeating-linear-gradient(#888 0 1px, transparent 1px 2px)";
const dotsAcross = "repeating-linear-gradient(90deg, #888 0 1px, transparent 1px 2px)";

const Guide = styled.span`
  align-self: stretch;
  width: 19px;
  background: ${(p) => (p.$line ? `${dotsDown} 9px 0 / 1px 100% no-repeat` : "none")};
`;

const Joint = styled.span`
  align-self: stretch;
  display: flex;
  align-items: center;
  width: 21px;
  padding-left: 5px;
  background:
    ${dotsDown} 9px 0 / 1px ${(p) => (p.$last ? "50%" : "100%")} no-repeat,
    ${dotsAcross} 9px 50% / 12px 1px no-repeat;
`;

const Toggle = styled.button`
  width: 9px;
  height: 9px;
`;

const NodeIcon = styled.span`
  width: 15px;
  svg {
    overflow: visible;
  }
`;

const NodeLabel = styled.span`
  margin-left: 3px;
  padding: 0 2px;
  line-height: 15px;
  white-space: nowrap;
  font-size: ${(p) => (p.$bold ? 12 : 11)}px;
  font-weight: ${(p) => (p.$bold ? "bold" : "normal")};
  ${(p) => p.$selected && css`
    background: #0078d7;
    color: #fff;
    outline: 1px dotted #d98a28;
    outline-offset: -1px;
  `}
`;

const counters = [
  ["Appointments", "0", "", ""],
  ["Correspondence", "0/0", "", ""],
  ["Work Orders", "0", "", ""],
  ["Applicants", "", "0", "0"],
  ["Residents", "", "0", "0"],
  ["Inspections", "", "", "0"],
  ["Appeals", "0", "", ""],
  ["Reminders", "0", "", ""],
  ["Approvals", "0", "", ""],
  ["RARs", "0", "", ""],
];

const favorites = [
  ["*Locator", "Operating System"],
  ["Resident Processing", "Low Income Public Housing"],
  ["Worker Setup", "Operating System"],
  ["*Role Security Setup", "Operating System"],
  ["Submit 50058 Data to PIC", "Low Income Public Housing"],
  ["Submit 50058 Data to PIC", "Section 8"],
  ["Resident Processing", "Section 8"],
  ["Batch Correspondence S...", "Operating System"],
  ["*Menu Setup", "Operating System"],
  ["*Work Orders", "Work Orders"],
];

const Tri = ({ d }) => (
  <svg width="9" height="9" viewBox="0 0 9 9" aria-hidden="true"><path d={d} fill="#000" /></svg>
);
const triUp = "M1 6 L4.500 2.500 L8 6Z";
const triDown = "M1 3 L4.500 6.500 L8 3Z";
const triLeft = "M6 1 L2.500 4.500 L6 8Z";
const triRight = "M3 1 L6.500 4.500 L3 8Z";

const ElitePanel = () => (
  <Panel>
    <EliteHead>
      <BigHeading>My Elite</BigHeading>
      <a href="#">Refresh</a>
      <ColumnName $line>LIPH</ColumnName>
      <ColumnName>HCV</ColumnName>
    </EliteHead>
    <CounterBox>
      <CounterTable>
        <tbody>
          {counters.map(([name, ...values]) => (
            <tr key={name}>
              <th scope="row">{name}</th>
              {values.map((v, i) => (
                <td key={i}>{v && <a href="#">{v}</a>}</td>
              ))}
            </tr>
          ))}
        </tbody>
      </CounterTable>
    </CounterBox>
    <FavHead>
      <BigHeading>Favorites</BigHeading>
      <a href="#">Report Navigator</a>
    </FavHead>
    <FavBody>
      <FavList>
        <FavTable>
          <thead>
            <tr>
              <th scope="col">Application</th>
              <th scope="col">Module</th>
            </tr>
          </thead>
          <tbody>
            {favorites.map(([name, module], i) => (
              <tr key={i}>
                <td>
                  <FavName>
                    <ScreenIcon form={name.startsWith("*")} />
                    {name.replace("*", "")}
                  </FavName>
                </td>
                <td>{module}</td>
              </tr>
            ))}
          </tbody>
        </FavTable>
      </FavList>
      <ClassicScroll $vertical>
        <button aria-label="Scroll up"><Tri d={triUp} /></button>
        <ClassicThumb $grow={109} />
        <ClassicGap $grow={37} />
        <button aria-label="Scroll down"><Tri d={triDown} /></button>
      </ClassicScroll>
    </FavBody>
    <ClassicScroll $inset>
      <button aria-label="Scroll left"><Tri d={triLeft} /></button>
      <ClassicThumb $grow={264} />
      <ClassicGap $grow={18} />
      <button aria-label="Scroll right"><Tri d={triRight} /></button>
    </ClassicScroll>
    <CutoffTitle>Upcoming Cutoffs</CutoffTitle>
    <CutoffBox>
      <CutoffTable>
        <thead>
          <tr>
            <th scope="col">Program</th>
            <th scope="col">Hours/Min Left</th>
            <th scope="col">Cutoff Time</th>
          </tr>
        </thead>
        <tbody>
          <tr><td>Section 8</td><td>52:41</td><td>8/1/2025 2:00:00 PM</td></tr>
          <tr><td>Low Income Public H...</td><td>22:41</td><td>7/31/2025 8:00:00 AM</td></tr>
        </tbody>
      </CutoffTable>
    </CutoffBox>
    <ClassicScroll>
      <button aria-label="Scroll left"><Tri d={triLeft} /></button>
      <ClassicThumb $grow={295} />
      <ClassicGap $grow={3} />
      <button aria-label="Scroll right"><Tri d={triRight} /></button>
    </ClassicScroll>
  </Panel>
);

const Panel = styled.div`
  flex: 1;
  display: flex;
  flex-direction: column;
  min-width: 0;
  margin-left: 3px;
  a {
    color: #2222ee;
  }
`;

const BigHeading = styled.h2`
  font-size: 17px;
  line-height: 20px;
`;

const EliteHead = styled.div`
  display: flex;
  align-items: center;
  height: 26px;
  padding: 0 0 2px 8px;
  ${BigHeading} {
    width: 112px;
  }
  a {
    flex: 1;
    text-decoration: none;
  }
`;

const ColumnName = styled.span`
  align-self: stretch;
  display: flex;
  align-items: center;
  justify-content: center;
  width: ${(p) => (p.$line ? 72 : 57)}px;
  padding-left: ${(p) => (p.$line ? 2 : 8)}px;
  border-right: ${(p) => (p.$line ? "1px solid #999" : 0)};
  font-size: 13px;
  color: #333;
`;

const CounterBox = styled.div`
  height: 180px;
  padding: 3px 0 5px 50px;
  background: #ffffe1;
`;

const CounterTable = styled.table`
  width: 100%;
  height: 172px;
  table-layout: fixed;
  td {
    text-align: center;
  }
  th {
    width: 112px;
  }
  td:nth-child(2) {
    width: 53px;
  }
  td:nth-child(3) {
    width: 50px;
  }
  td:nth-child(4) {
    padding-left: 18px;
  }
`;

const FavHead = styled.div`
  display: flex;
  align-items: center;
  justify-content: space-between;
  height: 24px;
  padding: 0 9px 2px 139px;
  a {
    text-decoration: none;
  }
`;

const FavBody = styled.div`
  display: flex;
  height: 179px;
`;

const FavList = styled.div`
  flex: 1;
  background: #fff;
  overflow: hidden;
`;

const headCells = css`
  th {
    height: 16px;
    padding-left: 6px;
    background: #f0f0f0;
    border-bottom: 1px solid #a0a0a0;
    border-right: 1px solid #a0a0a0;
    white-space: nowrap;
  }
  th:last-child {
    border-right: 0;
  }
  td {
    white-space: nowrap;
  }
`;

const FavTable = styled.table`
  width: 100%;
  table-layout: fixed;
  ${headCells}
  th:first-child {
    width: 171px;
  }
  td {
    height: 17px;
    padding-left: 6px;
  }
  tbody tr:first-child td {
    height: 20px;
    padding-top: 3px;
  }
  td:first-child {
    padding-left: 19px;
  }
`;

const FavName = styled.span`
  display: flex;
  align-items: center;
  gap: 2px;
`;

const ClassicScroll = styled.div`
  display: flex;
  flex: none;
  flex-direction: ${(p) => (p.$vertical ? "column" : "row")};
  ${(p) => (p.$vertical ? "width: 17px;" : "height: 17px;")}
  margin-right: ${(p) => (p.$inset ? 17 : 0)}px;
  button {
    display: flex;
    align-items: center;
    justify-content: center;
    flex: none;
    width: 17px;
    height: 17px;
    border: 1px solid #a0a0a0;
    background: #f0f0f0;
  }
`;

const ClassicThumb = styled.span`
  flex: ${(p) => p.$grow} 0 0;
  border: 1px solid #a0a0a0;
  background: #f0f0f0;
`;

const ClassicGap = styled.span`
  flex: ${(p) => p.$grow} 0 0;
  background: #f6f6f6;
`;

const CutoffTitle = styled.h3`
  margin-top: 7px;
  height: 15px;
  font-size: 12px;
  line-height: 15px;
  text-align: center;
`;

const CutoffBox = styled.div`
  flex: 1;
  background: #fff;
  border-right: 1px solid #a0a0a0;
`;

const CutoffTable = styled.table`
  width: 100%;
  table-layout: fixed;
  ${headCells}
  th:nth-child(1) {
    width: 119px;
  }
  th:nth-child(2) {
    width: 91px;
  }
  th:nth-child(n + 2),
  td:nth-child(n + 2) {
    padding-left: 7px;
  }
  td {
    height: 14px;
    padding-left: 4px;
  }
  tbody tr:first-child td {
    height: 17px;
    padding-top: 3px;
  }
`;

const MainMenu = () => (
  <MenuWindow>
    <MenuTitle>
      <EliteMini size={16} />
      Main Menu
      <WindowButtons />
    </MenuTitle>
    <MenuBar>
      <button>File</button>
      <button>Access</button>
      <button>Help</button>
    </MenuBar>
    <MenuBody>
      <TreePane>
        <TreeView />
        <ScrollBar>
          <Chevron up />
          <Space $grow={150} />
          <Thumb $grow={335} />
          <Space $grow={31} />
          <Chevron />
        </ScrollBar>
        <Splitter>
          <svg width="4" height="6" viewBox="0 0 4 6"><path d="M4 0 V6 L0 3Z" fill="#0078d7" /></svg>
        </Splitter>
      </TreePane>
      <ElitePanel />
    </MenuBody>
    <MenuStatus>
      <span>Logged in: ECS Support</span>
      <span>Database: EliteLive</span>
      <span>Server: DHASQL2</span>
      <span>Environment: 2.0.3 Patch 43</span>
      <span>Version: 2.0.3</span>
      <Svg size={12} box={12}><path d="M1 12 L12 1 M5 12 L12 5 M9 12 L12 9" stroke="#888" /></Svg>
    </MenuStatus>
    <RedFrame />
  </MenuWindow>
);

const MenuWindow = styled.section`
  position: absolute;
  left: 487px;
  right: 109px;
  top: 254px;
  bottom: 112px;
  display: flex;
  flex-direction: column;
  background: #f0f0f0;
  border: 1px solid #666;
  font-family: ${classic};
  font-size: 11px;
  color: #111;
`;

const MenuTitle = styled.header`
  display: flex;
  align-items: center;
  flex: none;
  height: 31px;
  padding-left: 7px;
  gap: 6px;
  background: #fff;
  font-family: ${ui};
  font-size: 12px;
`;

const MenuBar = styled.nav`
  display: flex;
  flex: none;
  height: 20px;
  padding-left: 6px;
  gap: 13px;
  font-family: ${ui};
  font-size: 12px;
  line-height: 16px;
  button {
    height: 18px;
  }
`;

const MenuBody = styled.div`
  display: flex;
  flex: 1;
  min-height: 0;
  padding-top: 2px;
`;

const TreePane = styled.div`
  display: flex;
  flex: none;
  width: 354px;
  border-right: 1px solid #a0a0a0;
  border-bottom: 1px solid #a0a0a0;
`;

const Splitter = styled.span`
  display: flex;
  align-items: center;
  justify-content: flex-end;
  width: 8px;
`;

const MenuStatus = styled.footer`
  display: grid;
  grid-template-columns: 145px 125px 99px 177px 1fr 12px;
  align-items: center;
  flex: none;
  height: 20px;
  padding-left: 1px;
  white-space: nowrap;
  span:nth-child(4) {
    color: #f22;
  }
  svg {
    align-self: end;
  }
`;

const RedFrame = styled.div`
  position: absolute;
  left: 14px;
  top: 267px;
  width: 178px;
  height: 98px;
  border: 3px solid #f94144;
  box-shadow: 1px 3px 5px rgba(0, 0, 0, 0.5), inset 1px 3px 5px rgba(0, 0, 0, 0.4);
  pointer-events: none;
`;

/* ---------- remote banner and taskbar ---------- */

const Banner = () => (
  <BannerBox>
    <Svg size={18} box={18}>
      <path d="M5 6 V3 H15 V10 H10 M3 7 V14 H13 V12" fill="none" stroke="#1d6f72" strokeWidth="1.500" />
      <path d="M9 7 H1 M10 11.500 H17" stroke="#2a9a96" strokeWidth="1.500" />
    </Svg>
    <span>Your computer is being controlled by Colt Morgan</span>
    <BannerTools>
      <FiSettings size={17} />
      <Svg size={10} box={10}><path d="M0 3 L5 7 L10 3" fill="none" stroke="#aaa" strokeWidth="2" /></Svg>
    </BannerTools>
  </BannerBox>
);

const BannerBox = styled.div`
  position: absolute;
  top: 0;
  left: 50%;
  transform: translateX(-50%);
  display: flex;
  align-items: center;
  justify-content: space-between;
  width: 443px;
  height: 43px;
  padding: 0 30px 2px 24px;
  background: #262626;
  color: #999;
  font-size: 13px;
  white-space: nowrap;
`;

const BannerTools = styled.span`
  display: flex;
  align-items: center;
  gap: 7px;
`;

const IeIcon = () => (
  <Svg size={24} box={24}>
    <path d="M20 15 A8 8 0 1 1 20.500 12 H8" fill="none" stroke="#43b9ee" strokeWidth="4" />
    <path d="M2 23 Q-1 19 6 11 Q14 3 20 1 Q24 1 21 6" fill="none" stroke="#f2c230" strokeWidth="2" />
  </Svg>
);

const ExplorerIcon = () => (
  <Svg size={24} box={24}>
    <path d="M1 2 H10 L12 4 H23 V22 H1Z" fill="#fde08a" />
    <path d="M1 2 H10 L12 4 V6 H1Z" fill="#efc04a" />
    <path d="M5 13 H19 V22 H15 V17 H9 V22 H5Z" fill="#3aaee8" />
  </Svg>
);

const PanelIcon = () => (
  <Svg size={24} box={24}>
    <rect x="2" y="4" width="20" height="16" fill="#5fb9f0" stroke="#d5eefc" />
    <circle cx="8" cy="10" r="3.500" fill="#f6c744" />
    <path d="M14 7 h6 v2 h-6z M14 11 h6 v2 h-6z M5 16 h14 v2 h-14z" fill="#fff" />
  </Svg>
);

const Gear = ({ x, y, r }) => (
  <g transform={`translate(${x} ${y})`}>
    <circle r={r} fill="none" stroke="#c9d6e2" strokeWidth="3" />
    <circle r={r + 2} fill="none" stroke="#c9d6e2" strokeWidth="2" strokeDasharray="2 2.500" />
  </g>
);

const GearsIcon = () => (
  <Svg size={24} box={24}>
    <Gear x={9} y={9} r={5} />
    <Gear x={18} y={18} r={2.5} />
  </Svg>
);

const ServerIcon = () => (
  <Svg size={24} box={24}>
    <path d="M1 2 L13 1 V12 L2 14Z" fill="#3c8f4a" />
    <path d="M3 4 L11 3 V10 L4 11Z" fill="#4fa0e8" />
    <path d="M9 6 L15 4 V22 L9 19Z" fill="#8a97a5" />
    <path d="M15 8 L22 6 V21 L15 23Z" fill="#c9d1d9" />
    <path d="M17 10 l4 -1 M17 13 l4 -1 M17 16 l4 -1" stroke="#56606b" />
    <path d="M5 12 L9 10 V18Z" fill="#e3b53a" />
  </Svg>
);

const apps = [
  { name: "Internet Explorer", icon: <IeIcon /> },
  { name: "File Explorer", icon: <ExplorerIcon />, open: true },
  { name: "Firefox", icon: <Firefox size={24} /> },
  { name: "Control Panel", icon: <PanelIcon /> },
  { name: "Chrome", icon: <Chrome size={24} />, open: true },
  { name: "Services", icon: <GearsIcon /> },
  { name: "Server", icon: <ServerIcon />, open: true },
  { name: "Main Menu", icon: <EliteMini size={24} />, open: true, active: true },
];

const Taskbar = () => (
  <TaskbarBox>
    <TaskButton aria-label="Start"><FaWindows size={17} /></TaskButton>
    <TaskButton aria-label="Search">
      <Svg size={18} box={18}>
        <circle cx="11" cy="6.500" r="5" fill="none" stroke="#eee" strokeWidth="1.500" />
        <path d="M7.500 10 L1 17" stroke="#eee" strokeWidth="1.500" />
      </Svg>
    </TaskButton>
    <TaskButton aria-label="Task view">
      <Svg size={18} box={18}>
        <path d="M1.500 1 V4 H11.500 V1 M1.500 17 V14 H11.500 V17 M1.500 6.500 H11.500 V11.500 H1.500Z M15.500 1 V17" fill="none" stroke="#ddd" />
        <rect x="14" y="5" width="3" height="3" fill="#fff" />
      </Svg>
    </TaskButton>
    <Apps>
      {apps.map((app) => (
        <TaskButton key={app.name} aria-label={app.name} $open={app.open} $active={app.active}>
          {app.icon}
        </TaskButton>
      ))}
    </Apps>
    <Tray>
      <Svg size={16} box={16}><path d="M2 11 L8 5 L14 11" fill="none" stroke="#eee" strokeWidth="1.500" /></Svg>
      <Svg size={16} box={16}>
        <circle cx="7.500" cy="8.500" r="7.500" fill="#36b54a" />
        <path d="M3 9 Q5 3 10 5 Q8 8 11 10 Q7 14 5 11Z" fill="#d7f5d0" />
        <path d="M11.500 0 V8 M11 1 h4 M11 4 h4 M11 7.500 h4" stroke="#d2202c" strokeWidth="2" />
      </Svg>
      <Svg size={16} box={16}>
        <path d="M5 3.500 H15.500 V11.500 H3.500 V7 M9.500 12 V14.500 M6 14.500 H13" fill="none" stroke="#eee" />
        <rect x="0.500" y="1.500" width="4" height="5" fill="none" stroke="#eee" />
      </Svg>
      <Svg size={16} box={16}>
        <path d="M1.500 3 L13 1.500 H15 V9 M1.500 3 V14 L8 14.500 M5 7 q3 -4 5 -1 M5 11 q2 2 4 0" fill="none" stroke="#eee" />
        <circle cx="12" cy="11.500" r="4.500" fill="#e81224" />
        <path d="M12 9 v3 M12 13 v1" stroke="#fff" strokeWidth="1.500" />
      </Svg>
      <Svg size={16} box={16}>
        <path d="M1 6 H4 L8 2 V14 L4 11 H1Z" fill="none" stroke="#eee" />
        <circle cx="12" cy="11.500" r="4" fill="#e81224" />
        <path d="M10.500 10 l3 3 M13.500 10 l-3 3" stroke="#fff" />
      </Svg>
      <Clock>
        <span>9:18 AM</span>
        <span>7/30/2025</span>
      </Clock>
      <Notice>
        <Svg size={18} box={18}>
          <path d="M1 1 H17 V14 H8 L4 17 V14 H1Z" fill="#fff" />
          <path d="M3 4.500 h12 M3 7.500 h12 M3 10.500 h8" stroke="#111" />
        </Svg>
        <Count>2</Count>
      </Notice>
      <ShowDesktop />
    </Tray>
  </TaskbarBox>
);

const TaskbarBox = styled.footer`
  display: flex;
  flex: none;
  height: 40px;
  background: #000;
  color: #fff;
`;

const TaskButton = styled.button`
  display: flex;
  align-items: center;
  justify-content: center;
  width: 48px;
  height: 40px;
  background: ${(p) => (p.$active ? "#333" : "none")};
  box-shadow: ${(p) => (p.$open && !p.$active ? "inset 0 -2px #76b9ed" : "none")};
  color: #fff;
`;

const Apps = styled.div`
  display: flex;
  gap: 1px;
  padding-left: 5px;
`;

const Tray = styled.div`
  display: flex;
  align-items: center;
  gap: 8px;
  margin-left: auto;
`;

const Clock = styled.div`
  display: flex;
  flex-direction: column;
  align-items: center;
  width: 56px;
  margin-right: 8px;
  font-size: 11px;
  line-height: 18px;
`;

const Notice = styled.span`
  position: relative;
  margin-right: 11px;
`;

const Count = styled.span`
  position: absolute;
  left: 7px;
  top: 7px;
  width: 18px;
  height: 18px;
  border-radius: 50%;
  border: 1px solid #777;
  background: #222;
  font-size: 12px;
  line-height: 16px;
  text-align: center;
`;

const ShowDesktop = styled.span`
  width: 5px;
  height: 40px;
  border-left: 1px solid #555;
`;

const App = () => (
  <Screen>
    <GlobalStyle />
    <Desktop>
      <DesktopIcons />
      <HiddenFile>
        <PaperFile />
      </HiddenFile>
      <Banner />
      <Explorer />
      <MainMenu />
    </Desktop>
    <Taskbar />
  </Screen>
);

const Screen = styled.main`
  display: flex;
  flex-direction: column;
  height: 100vh;
  background: #000;
`;

const Desktop = styled.div`
  position: relative;
  flex: 1;
  min-height: 0;
`;

const HiddenFile = styled.span`
  position: absolute;
  left: 540px;
  top: 106px;
`;

export default App;
